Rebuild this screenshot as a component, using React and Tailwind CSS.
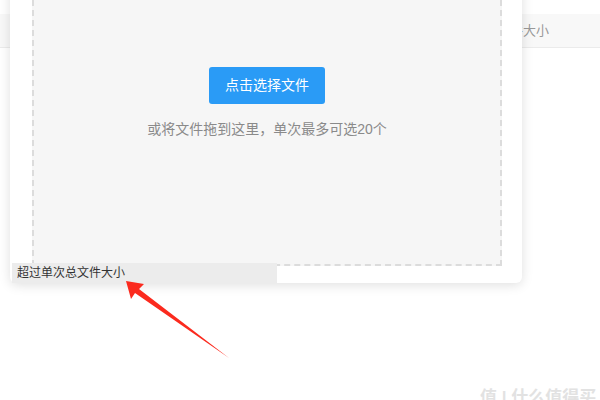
export default function App() {
  return (
    <div className="relative h-[400px] w-[600px] overflow-hidden bg-white font-['Liberation_Sans','Noto_Sans_CJK_SC',sans-serif]">
      {/* page behind the dialog */}
      <div className="pt-[14px]">
        <div className="flex h-[34px] items-center border-b border-[#ebebeb] bg-[#f8f8f8] pl-[432px] text-[13px] text-[#999]">
          超过单次总文件大小
        </div>
      </div>

      {/* upload dialog */}
      <div className="absolute left-[10px] top-[-40px] flex h-[323px] w-[512px] flex-col rounded-md bg-white pb-[17px] pl-[22px] pr-[20px] pt-[20px] shadow-[0_2px_12px_rgba(0,0,0,0.13)]">
        <div className="flex flex-1 flex-col items-center border-2 border-dashed border-[#dcdcdc] bg-[#f6f6f6] pt-[85px]">
          <button className="h-[37px] w-[116px] rounded-[3px] bg-[#2a9bf6] text-[14px] text-white">
            点击选择文件
          </button>
          <p className="mt-[15px] text-[14px] leading-[20px] text-[#8a8a8a]">
            或将文件拖到这里，单次最多可选20个
          </p>
        </div>
      </div>

      {/* tooltip */}
      <div className="absolute left-[12px] top-[263px] h-[20px] w-[265px] bg-[#ececec] pl-[5px] text-[12px] leading-[20px] text-[#333]">
        超过单次总文件大小
      </div>

      {/* annotation arrow */}
      <svg className="absolute left-0 top-0" width="600" height="400" viewBox="0 0 600 400">
        <polygon
          points="126,281 144,284 139,289 229,358 135,293 131,299"
          fill="#fb2a1e"
        />
      </svg>

      {/* watermark */}
      <div className="absolute left-[480px] top-[385px] whitespace-nowrap text-[17px] font-bold text-[#e2e2e2]">
        值 | 什么值得买
      </div>
    </div>
  )
}
